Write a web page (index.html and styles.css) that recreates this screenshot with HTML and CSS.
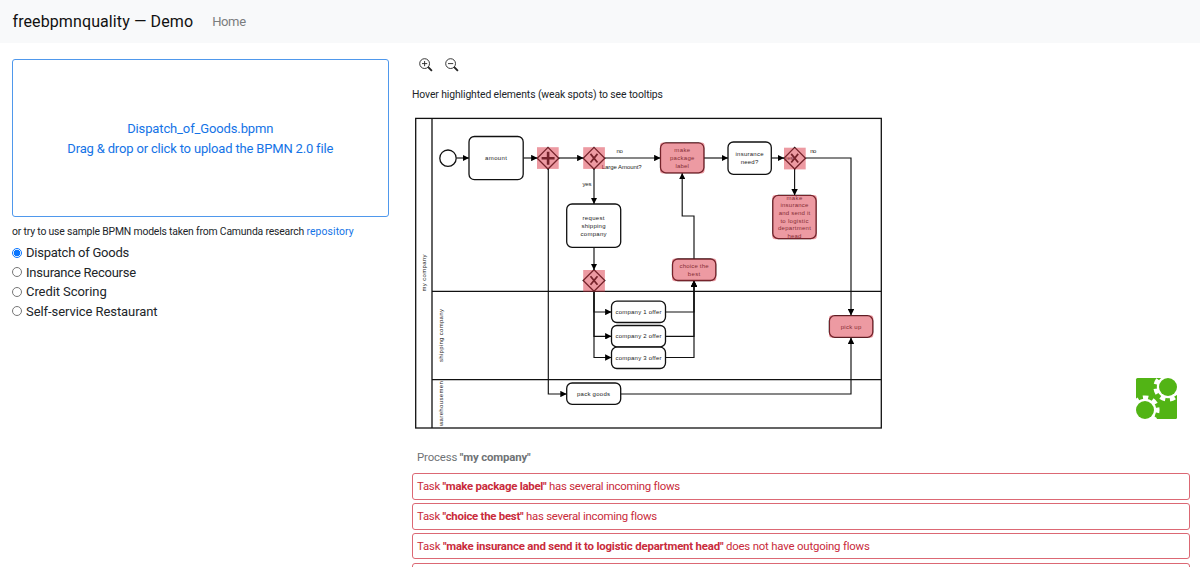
FILE: index.html
```html
<!DOCTYPE html>
<html lang="en">
<head>
<meta charset="utf-8">
<title>freebpmnquality — Demo</title>
<link rel="stylesheet" href="styles.css">
</head>
<body>
<header class="navbar">
  <a class="brand">freebpmnquality — Demo</a>
  <nav><a class="nav-link">Home</a></nav>
</header>
<main class="layout">
  <section class="sidebar">
    <div class="dropzone">
      <span class="file-name">Dispatch_of_Goods.bpmn</span>
      <span class="drop-hint">Drag &amp; drop or click to upload the BPMN 2.0 file</span>
    </div>
    <p class="samples-note"><span>or try to use sample BPMN models taken from Camunda research</span> <a class="link">repository</a></p>
    <div class="samples">
      <label class="sample s1"><i class="radio checked"></i><span>Dispatch of Goods</span></label>
      <label class="sample s2"><i class="radio"></i><span>Insurance Recourse</span></label>
      <label class="sample s3"><i class="radio"></i><span>Credit Scoring</span></label>
      <label class="sample s4"><i class="radio"></i><span>Self-service Restaurant</span></label>
    </div>
  </section>
  <section class="content">
    <div class="zoom-tools">
      <svg class="zoom-icon" viewBox="0 0 14 14"><circle cx="5.6" cy="5.6" r="4.9"/><path d="M3 5.6h5.2M5.6 3v5.2"/><path class="handle" d="M9.2 9.2l3.7 3.7"/></svg>
      <svg class="zoom-icon" viewBox="0 0 14 14"><circle cx="5.6" cy="5.6" r="4.9"/><path d="M3 5.6h5.2"/><path class="handle" d="M9.2 9.2l3.7 3.7"/></svg>
    </div>
    <p class="tooltip-note">Hover highlighted elements (weak spots) to see tooltips</p>
    <svg class="diagram" viewBox="412 110 778 330">
      <defs>
        <marker id="arrow" viewBox="0 0 6 6" refX="6" refY="3" markerWidth="6.4" markerHeight="6.4" markerUnits="userSpaceOnUse" orient="auto"><path d="M0 0L6 3L0 6z"/></marker>
        <path id="gateway" class="shape" d="M0-10.8L10.8 0L0 10.8L-10.8 0z"/>
        <path id="cross" class="cross" d="M-3.5-4.3L3.5 4.3M3.5-4.3L-3.5 4.3"/>
      </defs>
      <g class="pool">
        <rect x="415.7" y="118.4" width="465.6" height="309.6"/>
        <path d="M432 118.4V428M432 291.4H881.3M432 379.7H881.3"/>
      </g>
      <g class="flows">
        <path d="M456.5 158H469"/><path d="M523.5 158H537.5"/><path d="M559 158H583.5"/><path d="M605 158H660.5"/>
        <path d="M704 158H728"/><path d="M771 158H784"/><path d="M794.6 169V195.5"/><path d="M594 169V204"/>
        <path d="M594 247.5V270"/><path d="M548.3 169V394H566.7"/><path d="M594 291V312H611.5"/>
        <path d="M594 291V336.3H611.5"/><path d="M594 291V357.5H611.5"/>
        <path d="M665.5 312H694V280.5"/><path d="M665.5 336.3H694V280.5"/><path d="M665.5 357.5H694V280.5"/>
        <path d="M694 259V216H682.2V173"/><path d="M805.7 158H851V315.5"/><path d="M620.5 394H851V337.5"/>
      </g>
      <g class="shape">
        <circle cx="448" cy="158.2" r="8.2"/>
        <rect x="469" y="136.5" width="54.2" height="43.2" rx="5.4"/>
        <rect x="660.5" y="142.8" width="43.4" height="30" rx="5.4"/>
        <rect x="728" y="142" width="43.3" height="32.3" rx="5.4"/>
        <rect x="772.8" y="195.4" width="43.3" height="43.2" rx="5.4"/>
        <rect x="566.7" y="204" width="54" height="43.3" rx="5.4"/>
        <rect x="672.5" y="259" width="43.3" height="21.5" rx="5.4"/>
        <rect x="611.5" y="301.2" width="54" height="21.3" rx="5.4"/>
        <rect x="611.5" y="325.5" width="54" height="21.3" rx="5.4"/>
        <rect x="611.5" y="347.2" width="54" height="21.3" rx="5.4"/>
        <rect x="566.7" y="383" width="54" height="21.4" rx="5.4"/>
        <rect x="829.4" y="315.7" width="43.4" height="21.6" rx="5.4"/>
      </g>
      <use href="#gateway" x="548" y="158.2"/><use href="#gateway" x="594" y="158.2"/>
      <use href="#gateway" x="594" y="280.5"/><use href="#gateway" x="794.7" y="158.2"/>
      <path class="plus" d="M541.6 158.2h13M548.1 151.7v13"/>
      <use href="#cross" x="594" y="158.2"/><use href="#cross" x="594" y="280.5"/><use href="#cross" x="794.7" y="158.2"/>
      <g class="labels">
        <text x="496" y="160.2" textLength="22">amount</text>
        <text x="619.7" y="153.4" textLength="6.2">no</text>
        <text x="621.7" y="169.4" textLength="40">Large Amount?</text>
        <text x="587" y="186.2" textLength="9">yes</text>
        <text x="593.5" y="220.2" textLength="22">request</text>
        <text x="593.5" y="227.9" textLength="24">shipping</text>
        <text x="593.5" y="235.5" textLength="26">company</text>
        <text x="682.2" y="152.4" textLength="16">make</text>
        <text x="682.2" y="160.1" textLength="24.5">package</text>
        <text x="682.2" y="167.7" textLength="13.5">label</text>
        <text x="749.5" y="156.4" textLength="28">insurance</text>
        <text x="749.5" y="163.8" textLength="17.5">need?</text>
        <text x="788.8" y="160.2" textLength="9">yes</text>
        <text x="813.3" y="153.2" textLength="6.2">no</text>
        <text x="794.4" y="199.7" textLength="16">make</text>
        <text x="794.4" y="207.4" textLength="28">insurance</text>
        <text x="794.4" y="215" textLength="31.5">and send it</text>
        <text x="794.4" y="222.7" textLength="28">to logistic</text>
        <text x="794.4" y="230.4" textLength="33">department</text>
        <text x="794.4" y="238" textLength="14">head</text>
        <text x="694" y="268" textLength="29">choice the</text>
        <text x="694" y="275.5" textLength="12.5">best</text>
        <text x="638.5" y="314.2" textLength="46">company 1 offer</text>
        <text x="638.5" y="338.4" textLength="46">company 2 offer</text>
        <text x="638.5" y="359.7" textLength="46">company 3 offer</text>
        <text x="593.5" y="396.1" textLength="33">pack goods</text>
        <text x="851" y="328.7" textLength="20.5">pick up</text>
        <text transform="translate(426 273) rotate(-90)" textLength="37">my company</text>
        <text transform="translate(442.5 335.6) rotate(-90)" textLength="53">shipping company</text>
        <text transform="translate(442.5 403.6) rotate(-90)" textLength="45">warehousemen</text>
      </g>
      <g class="highlight">
        <rect x="537" y="147.2" width="21.7" height="21.7"/><rect x="583.2" y="147.2" width="21.7" height="21.7"/>
        <rect x="583.2" y="270" width="21.7" height="21.7"/><rect x="784" y="147.7" width="21.7" height="21.7"/>
        <rect x="660" y="142.5" width="44.5" height="31" rx="3"/><rect x="772.3" y="195" width="44.5" height="44.2" rx="3"/>
        <rect x="672" y="258.5" width="44.3" height="22.7" rx="3"/><rect x="829" y="315.2" width="44.3" height="22.6" rx="3"/>
      </g>
      <g transform="translate(1136 378)">
        <rect class="logo-fill" width="41" height="41" rx="1.5"/>
        <path class="logo-gap" d="M30-1h12v20H30zM-1 30h20v12H-1z"/>
        <path class="logo-fill" d="M41 17V24H33V21zM17 41H24V33H21z"/>
        <circle class="logo-gap" cx="32" cy="9" r="11.2"/>
        <circle class="logo-gap" cx="9" cy="32" r="11.2"/>
        <circle class="logo-teeth" cx="32" cy="9" r="12.5" transform="rotate(12 32 9)"/>
        <circle class="logo-teeth" cx="9" cy="32" r="12.5" transform="rotate(-11 9 32)"/>
        <circle class="logo-fill" cx="32" cy="9" r="9"/>
        <circle class="logo-fill" cx="9" cy="32" r="9"/>
      </g>
    </svg>
    <div class="report">
      <h2 class="process">Process <b>"my company"</b></h2>
      <div class="issue">Task <b>"make package label"</b> has several incoming flows</div>
      <div class="issue">Task <b>"choice the best"</b> has several incoming flows</div>
      <div class="issue long">Task <b>"make insurance and send it to logistic department head"</b> does not have outgoing flows</div>
      <div class="issue"></div>
    </div>
  </section>
</main>
</body>
</html>
```
FILE: styles.css
```css
* { box-sizing: border-box; }
html, body { height: 100%; overflow: hidden; }
body { margin: 0; background: #fff; color: #212529; font: 13px/19.5px Roboto, "Noto Sans", sans-serif; white-space: nowrap; }
.navbar { height: 42.5px; padding: 1px 12.5px 0; display: flex; align-items: center; gap: 19px; background: #f8f9fa; }
.brand { font-size: 16px; letter-spacing: 0.1px; color: #111; }
.nav-link { display: block; color: #7b7d7e; letter-spacing: -0.35px; }
.layout { display: grid; grid-template-columns: 376.5px 777.5px; gap: 23.5px; padding: 16px 0 0 12px; }
.content { margin-top: 0.5px; }
.dropzone { height: 158px; padding-top: 2px; border: 1px solid #4f98ec; border-radius: 3px; color: #1473e6; display: flex; flex-direction: column; align-items: center; justify-content: center; }
.file-name { letter-spacing: -0.13px; }
.drop-hint { letter-spacing: -0.17px; }
.samples-note { margin: 7px 0 4.5px; font-size: 10.4px; line-height: 15px; letter-spacing: -0.18px; }
.link { color: #1473e6; letter-spacing: 0.1px; }
.sample { display: flex; align-items: center; height: 19.5px; gap: 4px; }
.s1, .s2 { letter-spacing: -0.24px; }
.s3, .s4 { letter-spacing: -0.07px; }
.radio { width: 10px; height: 10px; border: 1px solid #777; border-radius: 50%; display: block; }
.checked { border-color: #0875ff; background: radial-gradient(circle, #0875ff 0 3px, #fff 3.6px); }
.zoom-tools { display: flex; gap: 12px; padding-left: 7px; height: 13.5px; }
.zoom-icon { display: block; width: 14px; height: 14px; margin-top: -1px; fill: none; stroke: #222; stroke-width: 0.9; }
.zoom-icon .handle { stroke-width: 1.9; }
.tooltip-note { margin: 14.5px 0 8px; font-size: 10.4px; line-height: 15px; letter-spacing: -0.11px; }
.diagram { display: block; width: 778px; height: 330px; }
.pool { fill: none; stroke: #111; stroke-width: 1.3; }
.flows path { fill: none; stroke: #111; stroke-width: 1.15; marker-end: url(#arrow); }
.shape { fill: #fff; stroke: #111; stroke-width: 1.3; }
.plus { stroke: #111; stroke-width: 2.6; }
.cross { fill: none; stroke: #111; stroke-width: 1.8; }
.labels { font: 6px "Liberation Sans", Arial, sans-serif; fill: #222; text-anchor: middle; }
.highlight { fill: #dc3545; fill-opacity: 0.5; }
.logo-fill { fill: #52b415; }
.logo-gap { fill: #fff; }
.logo-teeth { fill: none; stroke: #fff; stroke-width: 4.2; stroke-dasharray: 5.2 4.617; }
.report { padding-top: 5px; font-size: 11.4px; letter-spacing: -0.25px; }
.process { margin: 0; padding: 0 5px; height: 25px; line-height: 25px; font-size: inherit; font-weight: 400; letter-spacing: -0.15px; color: #6f7376; }
.issue { height: 26.5px; margin: 3.3px 0 0; padding: 0 4px; border: 1px solid #dc6874; border-radius: 3px; color: #c92b3b; line-height: 25px; }
.long { letter-spacing: -0.19px; }
```
